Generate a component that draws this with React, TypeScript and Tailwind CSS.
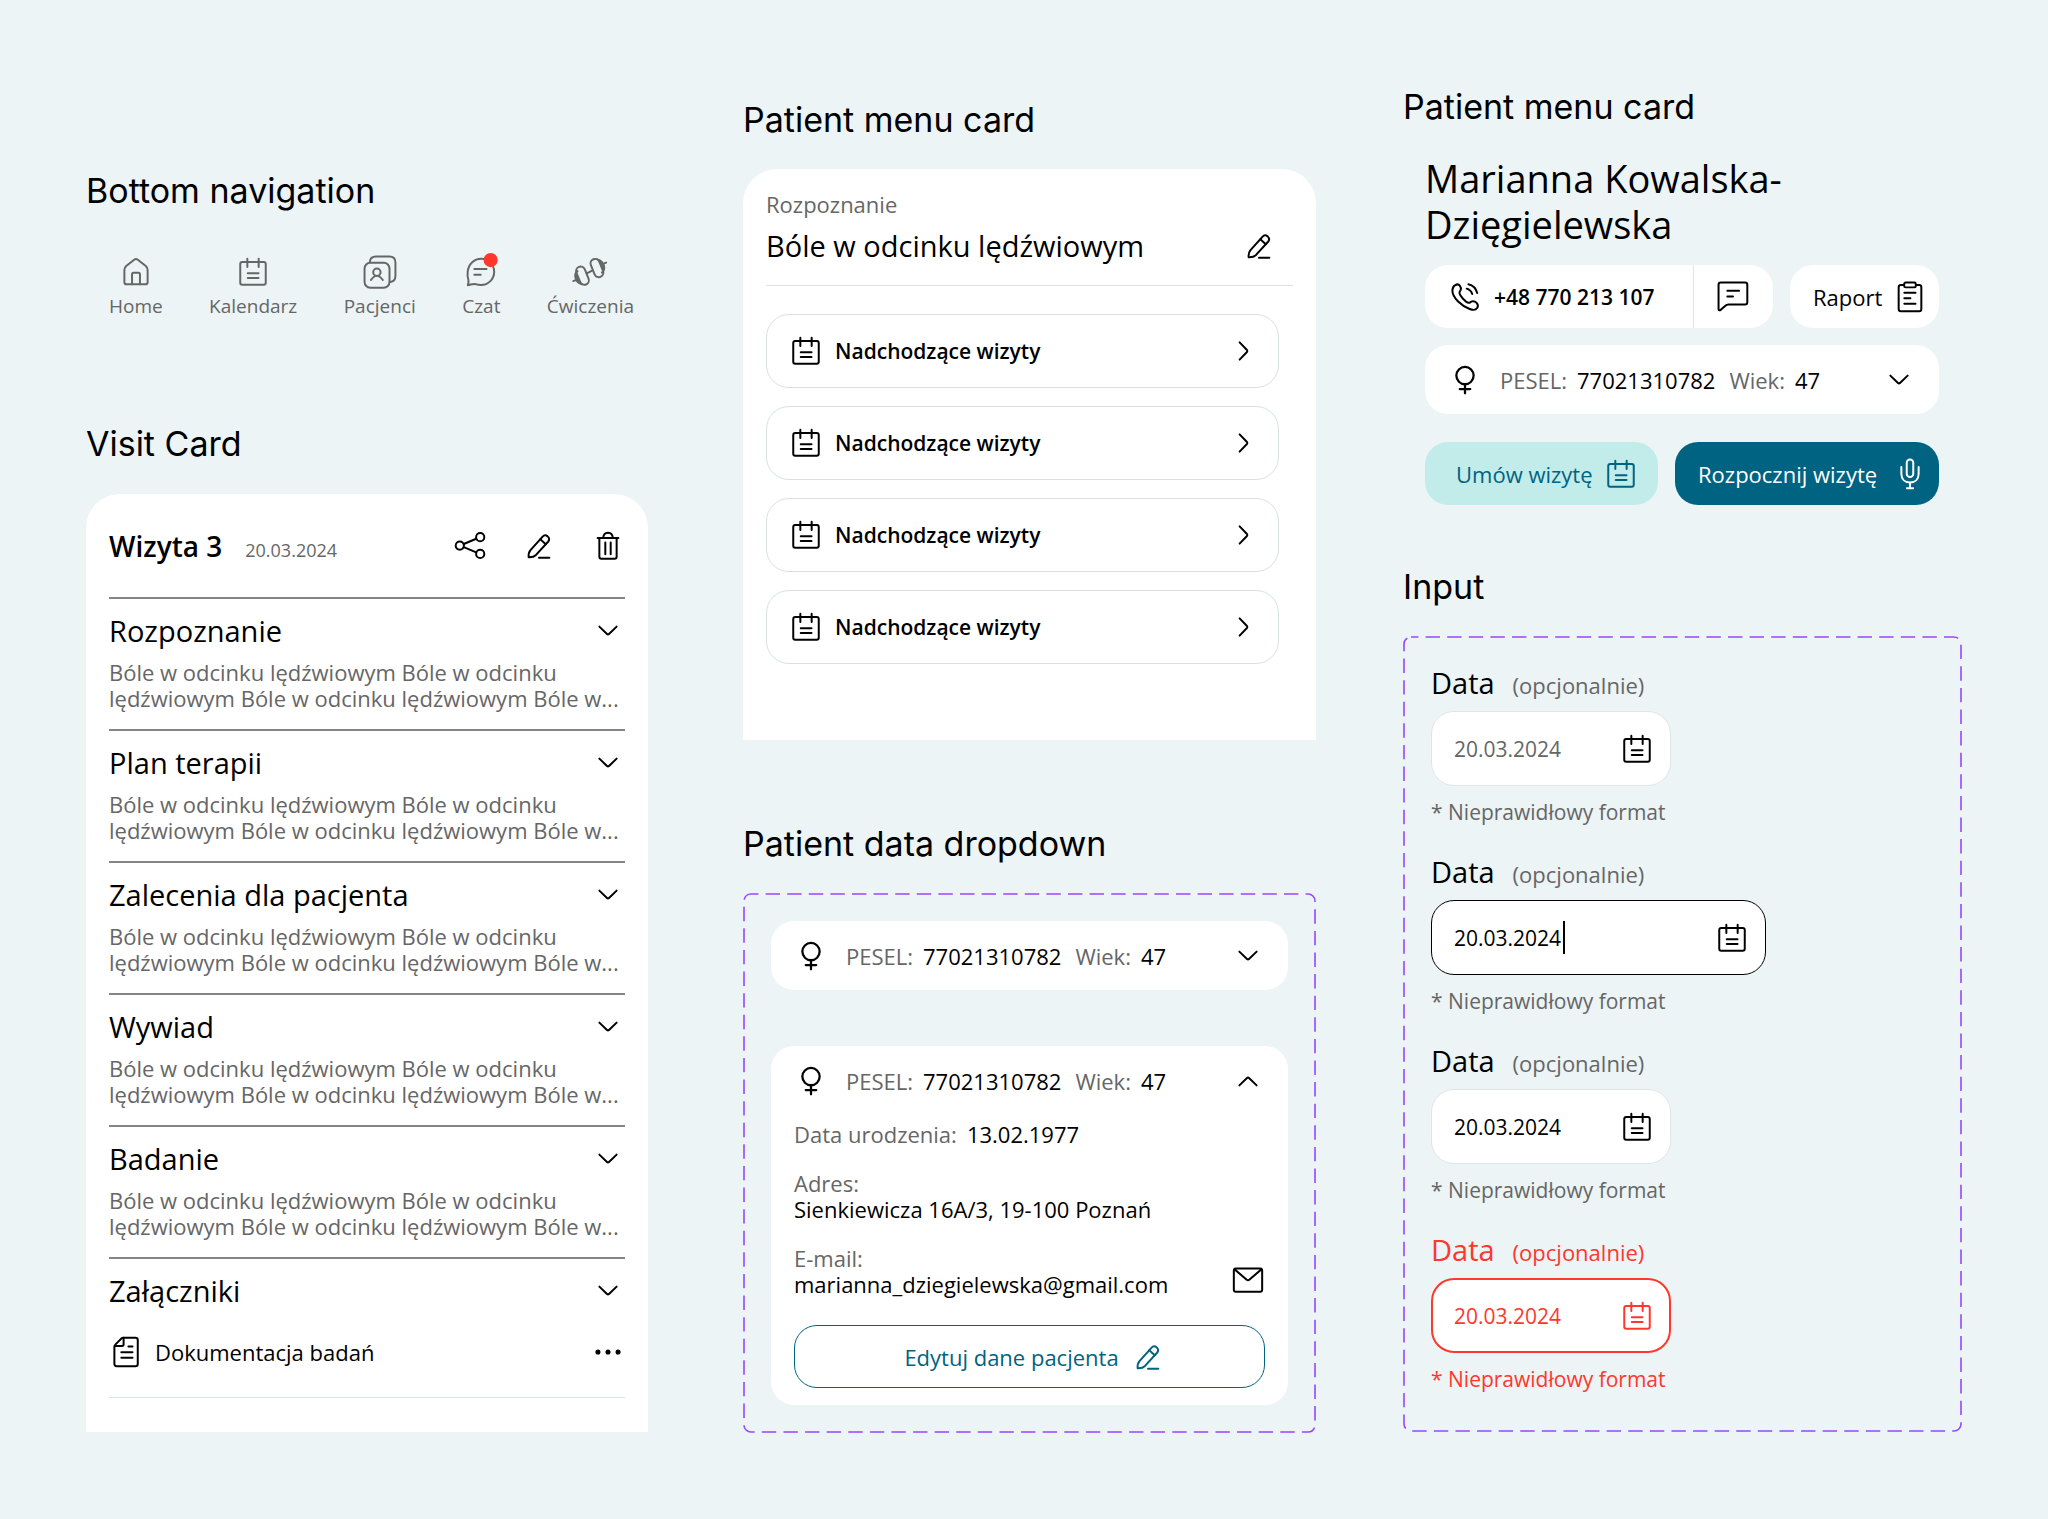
import type { ReactNode } from "react";
import clsx from "clsx";

type IconProps = { className?: string };

function Icon({ children, className }: IconProps & { children: ReactNode }) {
  return (
    <svg
      viewBox="0 0 24 24"
      className={clsx("size-[34px] shrink-0 overflow-visible", className)}
      fill="none"
      stroke="currentColor"
      strokeWidth={1.4}
      strokeLinecap="round"
      strokeLinejoin="round"
      aria-hidden="true"
    >
      {children}
    </svg>
  );
}

const HomeIcon = () => (
  <Icon>
    <path d="M10.7 3.3 5.1 7.8C4.3 8.5 3.8 9.4 3.8 10.5V19.2C3.8 20.2 4.4 20.7 5.3 20.7H18.7C19.6 20.7 20.2 20.2 20.2 19.2V10.5C20.2 9.4 19.7 8.5 18.9 7.8L13.3 3.3C12.4 2.6 11.6 2.6 10.7 3.3Z" />
    <path d="M9.2 20.7V13.6C9.2 12.9 9.6 12.5 10.3 12.5H13.7C14.4 12.5 14.8 12.9 14.8 13.6V20.7" />
  </Icon>
);

const CalendarIcon = () => (
  <Icon>
    <rect x="3" y="5" width="18" height="16" rx="1.4" />
    <path d="M8 2.6V8.4M16 2.6V8.4M8.3 12.8H15.9M8.3 16.3H15.9" />
  </Icon>
);

const PatientsIcon = () => (
  <Icon>
    <rect x="1.1" y="5.5" width="17.6" height="17.6" rx="4" />
    <path d="M4.8 5C5 2.5 6.6 1.1 9.2 1.1H18.6C21.4 1.1 22.9 2.6 22.9 5.4V14.6C22.9 17.2 21.6 18.7 19.2 19" />
    <circle cx="9.8" cy="12.2" r="2.6" />
    <path d="M5.6 17.6C6.4 16.2 7.5 15.5 8.6 14.8M14 17.6C13.2 16.2 12.1 15.5 11 14.8" />
  </Icon>
);

const ChatIcon = () => (
  <Icon>
    <path d="M2.7 21.3C3.3 19.5 3.4 18.3 3 17 2.4 15.4 2.4 13.6 2.6 11.8 3.1 6.6 7 2.7 12.2 2.7 17.4 2.7 21.3 6.8 21.3 11.8 21.3 17 17.2 21.2 12 21.2 10.7 21.2 9.5 21 8.3 20.6 6.4 20.1 4.8 21 2.7 21.3Z" />
    <path d="M7.3 9.9H15.9M7.3 13.9H11.8" />
    <circle cx="18.8" cy="3.6" r="5" className="fill-[#ff372c] stroke-none" />
  </Icon>
);

const DumbbellIcon = () => (
  <Icon>
    <rect x="3.5" y="7.9" width="6.4" height="13.4" rx="3.2" transform="rotate(-22 6.7 14.6)" />
    <rect x="13.7" y="2.5" width="6.4" height="13.4" rx="3.2" transform="rotate(-22 16.9 9.2)" />
    <path d="M9.7 12.9 13.9 10.9M3.2 11.4C.4 13.4 1.2 19.4 6.4 20.7M.2 18.4 1.9 17.7M20.4 12.4C23.2 10.4 22.4 4.4 17.2 3.1M23.4 5.4 21.7 6.1" />
    <path d="M2.4 14C2.6 16.2 3.2 18 4.6 19.6M21.2 9.8C21 7.6 20.4 5.8 19 4.2" />
  </Icon>
);

const ShareIcon = () => (
  <Icon>
    <circle cx="4.8" cy="11.7" r="2.9" />
    <circle cx="19.2" cy="5.8" r="2.9" />
    <circle cx="19.2" cy="17.6" r="2.9" />
    <path d="M7.6 10.6 16.4 6.9M7.6 12.8 16.4 16.5" />
  </Icon>
);

const PencilIcon = () => (
  <Icon>
    <path d="M4.7 19.9C4.5 17.9 4.8 16.3 6 14.9L14.4 5.5C15.4 4.4 17 4.3 18.1 5.2 19.3 6.3 19.4 7.8 18.4 9L9.9 18.3C8.6 19.6 6.8 20 4.7 19.9Z" />
    <path d="M12.9 7.2 16.8 10.7M12 20.3H19.3" />
  </Icon>
);

const TrashIcon = () => (
  <Icon>
    <path d="M4.7 6.4H19.3M5.9 6.4V19.6C5.9 20.5 6.4 21 7.3 21H16.7C17.6 21 18.1 20.5 18.1 19.6V6.4" />
    <path d="M8.6 6.2C8.8 3.8 9.9 2.6 12 2.6 14.1 2.6 15.2 3.8 15.4 6.2M10.1 9.5V17.8M13.9 9.5V17.8" />
  </Icon>
);

const DocumentIcon = () => (
  <Icon>
    <path d="M10.2 1.9H18.7C19.7 1.9 20.3 2.5 20.3 3.5V20.4C20.3 21.4 19.7 22 18.7 22H5.4C4.4 22 3.8 21.4 3.8 20.4V8.6C3.8 7.8 4.1 7.2 4.6 6.6L8.6 2.6C9 2.1 9.5 1.9 10.2 1.9Z" />
    <path d="M10.3 2V6.6C10.3 7.3 9.9 7.8 9.2 7.8H4M13.7 8.1H16.6M8.7 12.1H16.6M8.7 16H16.6" />
  </Icon>
);

const DotsIcon = () => (
  <Icon className="fill-black stroke-none">
    <circle cx="4.9" cy="12" r="1.8" />
    <circle cx="12" cy="12" r="1.8" />
    <circle cx="19.1" cy="12" r="1.8" />
  </Icon>
);

const ChevronIcon = ({ className }: IconProps) => (
  <Icon className={className}>
    <path d="M5.9 8.9 11.3 14.1C11.8 14.5 12.2 14.5 12.7 14.1L18.1 8.9" />
  </Icon>
);

const FemaleIcon = () => (
  <Icon>
    <circle cx="12" cy="8.9" r="6.1" strokeWidth={1.6} />
    <path d="M12 15.1V21.4M8.3 18.4H15.7" strokeWidth={1.6} />
  </Icon>
);

const MailIcon = () => (
  <Icon>
    <rect x="2" y="3.9" width="20" height="16.4" rx="1.4" />
    <path d="M2.6 4.5 11.1 11.8C11.7 12.3 12.3 12.3 12.9 11.8L21.4 4.5" />
  </Icon>
);

const PhoneIcon = () => (
  <Icon>
    <path d="M3.1 7.4C3.2 5.6 3.9 4.2 5.1 3.6 6.2 3 7.6 3 8.3 3.9 9 4.8 9.3 6 9 6.9 8.7 7.8 7.9 8.3 8.1 9.3 8.7 11.7 12.4 15.6 14.4 16.1 15.4 16.3 15.9 15.4 16.9 15.1 18 14.9 19.3 15.2 20.2 16.2 21.2 17.3 21.4 18.6 20.6 19.8 19.5 21.4 17.4 21.3 15.3 20.5 9.5 18.2 3 12.4 3.1 7.4Z" />
    <path d="M14.4 3C17.4 3.7 19.8 6.1 20.6 9.2M13.2 6.1C15.1 6.6 16.5 8 17.1 9.9" />
  </Icon>
);

const MessageIcon = () => (
  <Icon>
    <path d="M1.8 20.6V3.3C1.8 2.3 2.4 1.7 3.4 1.7H20.5C21.5 1.7 22.1 2.3 22.1 3.3V15.7C22.1 16.7 21.5 17.3 20.5 17.3H9C7.9 17.3 7.1 17.6 6.4 18.3L3.4 21C2.7 21.7 1.8 21.5 1.8 20.6Z" />
    <path d="M8 7.6H16.3M8 11.7H12" />
  </Icon>
);

const ClipboardIcon = () => (
  <Icon>
    <rect x="4" y="3.6" width="16" height="18.4" rx="1.6" />
    <rect x="7.9" y="1.8" width="8.2" height="3.4" rx="1" className="fill-white" />
    <path d="M8 9H15.9M8 12.9H12.3M8 16.8H15.9" />
  </Icon>
);

const MicIcon = () => (
  <Icon>
    <rect x="9.7" y="1.7" width="4.6" height="12.4" rx="2.3" />
    <path d="M5.9 7V11.8C5.9 15.6 8.3 18 12 18 15.7 18 18.1 15.6 18.1 11.8V7M12 18V22.1M9.8 22.1H14.2" />
  </Icon>
);

function Title({ children }: { children: ReactNode }) {
  return <h2 className="font-[Inter,sans-serif] text-[34px] leading-10">{children}</h2>;
}

function DashedFrame({ children, className }: IconProps & { children: ReactNode }) {
  return (
    <div className={clsx("relative mt-[29px]", className)}>
      <svg className="pointer-events-none absolute inset-0 size-full" aria-hidden="true">
        <rect
          className="h-[calc(100%-2px)] w-[calc(100%-2px)]"
          x="1"
          y="1"
          rx="7"
          fill="none"
          stroke="#9747ff"
          strokeWidth="1.6"
          strokeDasharray="14.4 7.2"
          strokeDashoffset="7"
        />
      </svg>
      {children}
    </div>
  );
}

const navItems = [
  { label: "Home", icon: <HomeIcon /> },
  { label: "Kalendarz", icon: <CalendarIcon /> },
  { label: "Pacjenci", icon: <PatientsIcon /> },
  { label: "Czat", icon: <ChatIcon /> },
  { label: "Ćwiczenia", icon: <DumbbellIcon /> },
];

function BottomNavigation() {
  return (
    <nav className="mt-11 flex justify-between pr-3.5 pl-[23px] text-[#666]">
      {navItems.map((item) => (
        <a key={item.label} href="#" className="flex flex-col items-center">
          {item.icon}
          <span className="mt-1 text-[19px] leading-[26px]">{item.label}</span>
        </a>
      ))}
    </nav>
  );
}

const sections = ["Rozpoznanie", "Plan terapii", "Zalecenia dla pacjenta", "Wywiad", "Badanie"];

function SectionHeader({ name }: { name: string }) {
  return (
    <button className="flex w-full items-center justify-between text-left text-[29px] leading-[34px]">
      {name}
      <ChevronIcon />
    </button>
  );
}

function VisitCard() {
  return (
    <article className="mt-[30px] rounded-t-[34px] bg-white px-[23px] pt-[35px] pb-[34px]">
      <header className="flex items-center pb-[34px]">
        <div className="flex flex-1 items-baseline gap-[23px]">
          <h3 className="text-[28px] leading-[34px] font-semibold">Wizyta 3</h3>
          <time className="text-[18px] leading-[26px] text-[#666]">20.03.2024</time>
        </div>
        <div className="flex gap-[35px]">
          <button aria-label="Udostępnij"><ShareIcon /></button>
          <button aria-label="Edytuj"><PencilIcon /></button>
          <button aria-label="Usuń"><TrashIcon /></button>
        </div>
      </header>
      {sections.map((name) => (
        <section key={name} className="border-t-2 border-[#858585] pt-[15px] pb-[18px]">
          <SectionHeader name={name} />
          <p className="mt-[11px] text-[22px] leading-[26px] text-[#666]">
            Bóle w odcinku lędźwiowym Bóle w odcinku lędźwiowym Bóle w odcinku lędźwiowym Bóle w...
          </p>
        </section>
      ))}
      <section className="border-t-2 border-b border-t-[#858585] border-b-[#e0e6e6] pt-[15px] pb-7">
        <SectionHeader name="Załączniki" />
        <div className="mt-[27px] flex items-center gap-3">
          <DocumentIcon />
          <span className="flex-1 text-[22px] leading-[26px]">Dokumentacja badań</span>
          <button aria-label="Więcej"><DotsIcon /></button>
        </div>
      </section>
    </article>
  );
}

function PatientMenuCard() {
  return (
    <article className="mt-[29px] rounded-t-[34px] bg-white px-[23px] pt-[22px] pb-[76px]">
      <header className="border-b border-[#dde4e4] pb-[22px]">
        <p className="text-[22px] leading-[26px] text-[#666]">Rozpoznanie</p>
        <div className="mt-3 flex items-center justify-between pr-[17px]">
          <h3 className="text-[29px] leading-[34px]">Bóle w odcinku lędźwiowym</h3>
          <button aria-label="Edytuj"><PencilIcon /></button>
        </div>
      </header>
      <div className="mt-7 mr-3.5 flex flex-col gap-[18px]">
        {[1, 2, 3, 4].map((n) => (
          <button
            key={n}
            className="flex h-[74px] items-center gap-3 rounded-[23px] border border-[#d9e0e0] pr-[17px] pl-[22px] text-left"
          >
            <CalendarIcon />
            <span className="flex-1 text-[21px] leading-[26px] font-semibold">Nadchodzące wizyty</span>
            <ChevronIcon className="-rotate-90" />
          </button>
        ))}
      </div>
    </article>
  );
}

function PatientSummary({ open = false }: { open?: boolean }) {
  return (
    <button aria-expanded={open} className="flex h-[69px] w-full items-center px-[23px] text-left text-[22px] leading-[26px]">
      <FemaleIcon />
      <span className="ml-[18px] text-[#666]">PESEL:</span>
      <span className="ml-2.5">77021310782</span>
      <span className="ml-3.5 text-[#666]">Wiek:</span>
      <span className="ml-2.5 flex-1">47</span>
      <ChevronIcon className={open ? "rotate-180" : undefined} />
    </button>
  );
}

function PatientDataDropdown() {
  return (
    <DashedFrame className="p-7">
      <div className="rounded-[23px] bg-white">
        <PatientSummary />
      </div>
      <div className="mt-14 rounded-[23px] bg-white pb-[17px]">
        <PatientSummary open />
        <div className="mt-1.5 px-[23px] text-[22px] leading-[26px]">
          <dl>
            <div className="flex gap-2.5">
              <dt className="text-[#666]">Data urodzenia:</dt>
              <dd>13.02.1977</dd>
            </div>
            <div className="mt-[23px]">
              <dt className="text-[#666]">Adres:</dt>
              <dd>Sienkiewicza 16A/3, 19-100 Poznań</dd>
            </div>
            <div className="mt-[23px] flex items-end justify-between">
              <div>
                <dt className="text-[#666]">E-mail:</dt>
                <dd>marianna_dziegielewska@gmail.com</dd>
              </div>
              <dd className="flex">
                <button aria-label="Wyślij e-mail"><MailIcon /></button>
              </dd>
            </div>
          </dl>
          <button className="mt-7 flex h-[63px] w-full items-center justify-center gap-3 rounded-[23px] border border-[#006381] pl-2.5 text-[#006381]">
            Edytuj dane pacjenta
            <PencilIcon />
          </button>
        </div>
      </div>
    </DashedFrame>
  );
}

function PatientHeaderCard() {
  return (
    <article className="mt-7 pr-[23px] pl-[22px] text-[22px] leading-[26px]">
      <h3 className="text-[38px] leading-[46px]">
        Marianna Kowalska-
        <br />
        Dzięgielewska
      </h3>
      <div className="mt-[18px] grid h-[63px] grid-cols-[348fr_149fr] gap-[17px]">
        <div className="flex overflow-hidden rounded-[23px] bg-white">
          <a
            href="tel:+48770213107"
            className="flex flex-1 items-center gap-3 border-r border-[#e0e6e6] pl-[23px] text-[21px] font-semibold"
          >
            <PhoneIcon />
            +48 770 213 107
          </a>
          <button aria-label="Wiadomość" className="pr-[23px] pl-[22px]"><MessageIcon /></button>
        </div>
        <button className="flex items-center justify-between rounded-[23px] bg-white pr-3 pl-[23px]">
          Raport
          <ClipboardIcon />
        </button>
      </div>
      <div className="mt-[17px] rounded-[23px] bg-white">
        <PatientSummary />
      </div>
      <div className="mt-7 grid h-[63px] grid-cols-[233fr_264fr] gap-[17px]">
        <button className="flex items-center justify-between rounded-[23px] bg-[#c2ece9] pr-5 pl-[31px] text-[#006381]">
          Umów wizytę
          <CalendarIcon />
        </button>
        <button className="flex items-center justify-between rounded-[23px] bg-[#006381] pr-3 pl-[23px] text-white">
          Rozpocznij wizytę
          <MicIcon />
        </button>
      </div>
    </article>
  );
}

type Field = {
  id: string;
  box: string;
  text?: string;
  input?: string;
  caret?: boolean;
};

const fields: Field[] = [
  { id: "date-default", box: "w-60 border-[#e0e6e6]", input: "text-[#666]" },
  { id: "date-focus", box: "w-[335px] border-black", caret: true },
  { id: "date-filled", box: "w-60 border-[#e0e6e6]" },
  { id: "date-error", box: "w-60 border-[#ff372c]", text: "text-[#ff372c]" },
];

function DateField({ field }: { field: Field }) {
  const muted = field.text ?? "text-[#666]";
  return (
    <div className={field.text}>
      <label htmlFor={field.id} className="flex items-baseline gap-[18px] text-[29px] leading-[34px]">
        Data
        <span className={clsx("text-[22px] leading-[26px]", muted)}>(opcjonalnie)</span>
      </label>
      <div
        className={clsx(
          "mt-[11px] flex h-[75px] items-center rounded-[23px] bg-white",
          field.text ? "border-2 pr-[15px] pl-[21px]" : "border pr-4 pl-[22px]",
          field.box,
        )}
      >
        <input
          id={field.id}
          type="text"
          defaultValue="20.03.2024"
          aria-describedby={`${field.id}-hint`}
          className={clsx("field-sizing-content text-[21px] leading-[26px] outline-none", field.input)}
        />
        {field.caret && <span className="ml-0.5 h-[33px] w-0.5 bg-black" />}
        <span className="ml-auto flex">
          <CalendarIcon />
        </span>
      </div>
      <p id={`${field.id}-hint`} className={clsx("mt-[13px] text-[21px] leading-[26px]", muted)}>
        * Nieprawidłowy format
      </p>
    </div>
  );
}

export default function App() {
  return (
    <main className="flex min-h-screen items-start bg-[#ecf4f6] px-[86px] pb-[87px] font-['Open_Sans','Noto_Sans',sans-serif] text-black">
      <div className="flex-[562_1_0%] pt-[171px]">
        <Title>Bottom navigation</Title>
        <BottomNavigation />
        <div className="mt-[105px]">
          <Title>Visit Card</Title>
          <VisitCard />
        </div>
      </div>
      <div className="ml-[95px] flex-[573_1_0%] pt-[100px]">
        <Title>Patient menu card</Title>
        <PatientMenuCard />
        <div className="mt-[84px]">
          <Title>Patient data dropdown</Title>
          <PatientDataDropdown />
        </div>
      </div>
      <div className="ml-[87px] flex-[559_1_0%] pt-[87px]">
        <Title>Patient menu card</Title>
        <PatientHeaderCard />
        <div className="mt-[62px]">
          <Title>Input</Title>
          <DashedFrame className="flex flex-col gap-[30px] px-7 pt-[30px] pb-10">
            {fields.map((field) => (
              <DateField key={field.id} field={field} />
            ))}
          </DashedFrame>
        </div>
      </div>
    </main>
  );
}
